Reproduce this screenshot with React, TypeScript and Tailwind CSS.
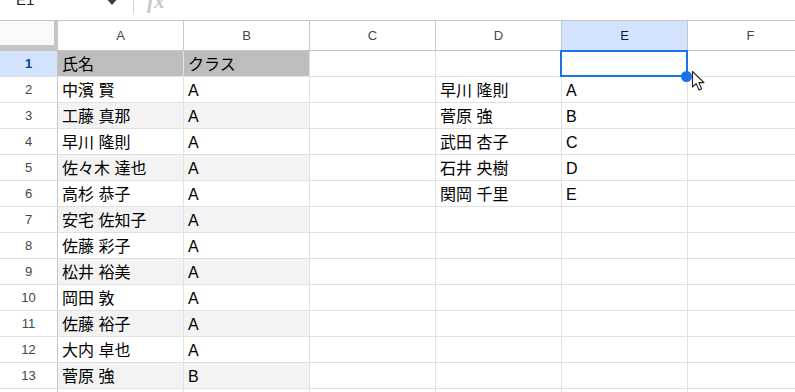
import React from "react";

const names = [
  "中濱 賢",
  "工藤 真那",
  "早川 隆則",
  "佐々木 達也",
  "高杉 恭子",
  "安宅 佐知子",
  "佐藤 彩子",
  "松井 裕美",
  "岡田 敦",
  "佐藤 裕子",
  "大内 卓也",
  "菅原 強",
];
const classes = ["A", "A", "A", "A", "A", "A", "A", "A", "A", "A", "A", "B"];
const dNames: Record<number, [string, string]> = {
  2: ["早川 隆則", "A"],
  3: ["菅原 強", "B"],
  4: ["武田 杏子", "C"],
  5: ["石井 央樹", "D"],
  6: ["関岡 千里", "E"],
};

const cols = ["A", "B", "C", "D", "E", "F"];

function Cell({ text, bg }: { text?: string; bg?: string }) {
  return (
    <div
      className={
        "w-[126px] shrink-0 h-full border-r border-[#e1e1e1] flex items-center pl-[4px] pt-[3px] text-[16px] text-black whitespace-nowrap overflow-hidden " +
        (bg ?? "")
      }
    >
      {text}
    </div>
  );
}

export default function App() {
  const rows = Array.from({ length: 14 }, (_, i) => i + 1);
  return (
    <div
      className="w-[795px] h-[392px] overflow-hidden bg-white"
      style={{ fontFamily: '"Liberation Sans", "Noto Sans CJK JP", Arial, sans-serif' }}
    >
      {/* toolbar */}
      <div className="h-[21px] border-b border-[#c4c7c5] flex items-start overflow-hidden">
        <div className="w-[105px] pl-[16px] -mt-[9px] text-[15px] text-[#1f1f1f] leading-[18px]">E1</div>
        <svg width="14" height="6" viewBox="0 0 14 6" className="mt-0">
          <path d="M0 -3 L14 -3 L8 4 Q7 5 6 4 Z" fill="#4a3a3a" />
        </svg>
        <div className="ml-[14px] w-px h-[13px] bg-[#d0d0d0]" />
        <div
          className="ml-[13px] -mt-[10px] text-[21px] italic font-bold text-[#c8c8c8] leading-[22px]"
          style={{ fontFamily: '"Liberation Serif", serif' }}
        >
          fx
        </div>
      </div>

      <div className="relative">
        {/* header row */}
        <div className="flex h-[30px]">
          <div className="w-[58px] shrink-0 h-full bg-[#f8f9fa] border-r-[4px] border-b-[6px] border-[#c4c7c5]" />
          {cols.map((c) => (
            <div
              key={c}
              className={
                "w-[126px] shrink-0 h-full border-r border-b border-[#c4c7c5] flex items-center justify-center text-[13px] " +
                (c === "E" ? "bg-[#d3e3fd] text-[#041e49]" : "bg-white text-[#444746]")
              }
            >
              {c}
            </div>
          ))}
        </div>

        {rows.map((r) => {
          const band = r === 1 ? "bg-[#bdbdbd]" : r % 2 === 1 ? "bg-[#f3f3f3]" : "bg-white";
          const d = dNames[r];
          const last = r === 14;
          return (
            <div key={r} className="flex h-[26px] border-b border-[#e1e1e1]">
              <div
                className={
                  "w-[58px] shrink-0 h-full border-r border-[#c4c7c5] flex items-center justify-center text-[13px] " +
                  (r === 1 ? "bg-[#d3e3fd] text-[#0b3d91] font-bold" : "bg-white text-[#444746]")
                }
              >
                {last ? "" : r}
              </div>
              <Cell text={last ? undefined : r === 1 ? "氏名" : names[r - 2]} bg={last ? "bg-white" : band} />
              <Cell text={last ? undefined : r === 1 ? "クラス" : classes[r - 2]} bg={last ? "bg-white" : band} />
              <Cell />
              <Cell text={d ? d[0] : undefined} />
              <Cell text={d ? d[1] : undefined} />
              <Cell />
            </div>
          );
        })}

        {/* selection */}
        <div className="absolute left-[560px] top-[29px] w-[128px] h-[27px] border-2 border-[#1a73e8]" />
        <div className="absolute left-[681px] top-[50px] w-[11px] h-[11px] rounded-full bg-[#1a73e8]" />
        <svg
          className="absolute left-[691px] top-[49px]"
          width="16"
          height="22"
          viewBox="0 0 16 22"
        >
          <path
            d="M1.5 1.5 L1.5 17 L5.2 13.6 L8 20 L10.6 18.8 L7.9 12.6 L13 12.6 Z"
            fill="white"
            stroke="#222"
            strokeWidth="1.1"
            strokeLinejoin="round"
          />
        </svg>
      </div>
    </div>
  );
}
